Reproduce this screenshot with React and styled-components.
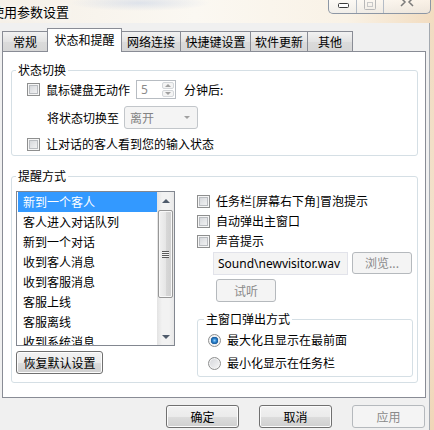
import React from 'react';
import styled, { createGlobalStyle, css } from 'styled-components';

const GlobalStyle = createGlobalStyle`
    html, body {
        margin: 0;
        padding: 0;
        background: #f0f0f0;
        overflow: hidden;
    }
    body {
        font-family: "Noto Sans", "Noto Sans CJK SC", sans-serif;
        font-size: 12px;
        color: #000;
    }
`;

const tabs = ['常规', '状态和提醒', '网络连接', '快捷键设置', '软件更新', '其他'];
const tabWidths = [46, 75, 60, 71, 58, 46];

const events = [
    '新到一个客人',
    '客人进入对话队列',
    '新到一个对话',
    '收到客人消息',
    '收到客服消息',
    '客服上线',
    '客服离线',
    '收到系统消息'
];

function App() {
    return (
        <Window>
            <GlobalStyle />
            <TitleBar>
                <Title>使用参数设置</Title>
                <CaptionButtons>
                    <CaptionButton $w={28}>
                        <svg width="14" height="8" viewBox="0 0 14 8">
                            <rect x="2.5" y="3.5" width="10" height="4" rx="1" fill="#fff" stroke="#3b3b3b" />
                        </svg>
                    </CaptionButton>
                    <CaptionButton $w={27}>
                        <svg width="14" height="11" viewBox="0 0 14 11">
                            <rect x="1.5" y="-1.5" width="11" height="11" rx="1" fill="none" stroke="#b8b8b8" />
                            <rect x="4.5" y="2.5" width="5" height="4" fill="none" stroke="#c8c8c8" />
                        </svg>
                    </CaptionButton>
                    <CaptionButton $w={46} $last>
                        <svg width="14" height="8" viewBox="0 0 14 8">
                            <path d="M1 -2 L5 2 L1 6 M13 -2 L9 2 L13 6" fill="none" stroke="#7a7a7a" strokeWidth="1.5" />
                        </svg>
                    </CaptionButton>
                </CaptionButtons>
            </TitleBar>
            <Body>
                <Main>
                    <TabStrip>
                        {tabs.map((t, i) => (
                            <Tab key={t} $w={tabWidths[i]} $active={i === 1}>{t}</Tab>
                        ))}
                    </TabStrip>
                    <Panel>
                        <Group>
                            <Legend>状态切换</Legend>
                            <StateBody>
                                <Row>
                                    <CheckBox />
                                    <Label>鼠标键盘无动作</Label>
                                    <SpinBox>
                                        <SpinValue>5</SpinValue>
                                        <SpinArrows>
                                            <SpinArrow><Arrow $up $small /></SpinArrow>
                                            <SpinArrow><Arrow $small /></SpinArrow>
                                        </SpinArrows>
                                    </SpinBox>
                                    <Label $gap={8}>分钟后:</Label>
                                </Row>
                                <SwitchRow>
                                    <Label $gap={0}>将状态切换至</Label>
                                    <Combo>
                                        <span>离开</span>
                                        <Arrow $small />
                                    </Combo>
                                </SwitchRow>
                                <Row>
                                    <CheckBox />
                                    <Label>让对话的客人看到您的输入状态</Label>
                                </Row>
                            </StateBody>
                        </Group>

                        <Group $top={13}>
                            <Legend>提醒方式</Legend>
                            <RemindBody>
                                <LeftCol>
                                    <List>
                                        <Items>
                                            {events.map((e, i) => (
                                                <Item key={e} $selected={i === 0}>{e}</Item>
                                            ))}
                                        </Items>
                                        <ScrollBar>
                                            <ScrollButton><Arrow $up /></ScrollButton>
                                            <Track>
                                                <Thumb>
                                                    <Grip />
                                                </Thumb>
                                            </Track>
                                            <ScrollButton><Arrow /></ScrollButton>
                                        </ScrollBar>
                                    </List>
                                    <Button $w={87} $mt={5}>恢复默认设置</Button>
                                </LeftCol>
                                <RightCol>
                                    <CheckList>
                                        <Row>
                                            <CheckBox />
                                            <Label>任务栏[屏幕右下角]冒泡提示</Label>
                                        </Row>
                                        <Row>
                                            <CheckBox />
                                            <Label>自动弹出主窗口</Label>
                                        </Row>
                                        <Row>
                                            <CheckBox />
                                            <Label>声音提示</Label>
                                        </Row>
                                    </CheckList>
                                    <FileRow>
                                        <FileField>Sound\newvisitor.wav</FileField>
                                        <Button $w={60} $h={22} disabled>浏览...</Button>
                                    </FileRow>
                                    <ListenRow>
                                        <Button $w={60} disabled>试听</Button>
                                    </ListenRow>
                                    <SubGroup>
                                        <Legend $ml={6}>主窗口弹出方式</Legend>
                                        <RadioBody>
                                            <Row>
                                                <Radio $checked />
                                                <Label>最大化且显示在最前面</Label>
                                            </Row>
                                            <Row>
                                                <Radio />
                                                <Label>最小化显示在任务栏</Label>
                                            </Row>
                                        </RadioBody>
                                    </SubGroup>
                                </RightCol>
                            </RemindBody>
                        </Group>
                    </Panel>
                    <ButtonBar>
                        <Button $w={73}>确定</Button>
                        <Button $w={73}>取消</Button>
                        <Button $w={73} disabled>应用</Button>
                    </ButtonBar>
                </Main>
                <FrameEdge />
            </Body>
        </Window>
    );
}

const Window = styled.div`
    width: 434px;
    height: 430px;
    display: flex;
    flex-direction: column;
    overflow: hidden;
    background: #f0f0f0;
`;

const TitleBar = styled.div`
    height: 23px;
    flex: none;
    display: flex;
    justify-content: space-between;
    align-items: flex-start;
    overflow: hidden;
    background:
        radial-gradient(ellipse 70px 8px at 140px 3px, rgba(170, 190, 225, 0.35), transparent),
        linear-gradient(90deg, #f5f0e8 0%, #fbf8f2 45%, #f9f2e6 80%, #f2dcc0 100%);
`;

const Title = styled.div`
    font-family: "Noto Sans CJK SC", sans-serif;
    font-size: 13px;
    line-height: 23px;
    text-indent: -9px;
    white-space: nowrap;
    text-shadow: 0 0 6px #fff;
`;

const CaptionButtons = styled.div`
    display: flex;
    height: 13px;
    margin-right: 3px;
    border: 1px solid #8d97a5;
    border-top: none;
    border-radius: 0 0 5px 5px;
    background: linear-gradient(rgba(255, 255, 255, 0.6), rgba(235, 235, 235, 0.6));
    overflow: hidden;
`;

const CaptionButton = styled.div`
    width: ${p => p.$w}px;
    display: flex;
    align-items: flex-start;
    justify-content: center;
    border-right: ${p => (p.$last ? 'none' : '1px solid #b4bcc6')};
    box-sizing: border-box;
`;

const Body = styled.div`
    flex: 1;
    display: flex;
    min-height: 0;
`;

const Main = styled.div`
    flex: 1;
    display: flex;
    flex-direction: column;
    padding: 5px 3px 0 2px;
`;

const FrameEdge = styled.div`
    width: 4px;
    border-left: 1px solid #a3a9b0;
    background: linear-gradient(#f1dcc2, #f3e2cc 60%, #f0d6b8);
`;

const TabStrip = styled.div`
    display: flex;
    align-items: flex-end;
    height: 24px;
    margin-bottom: -1px;
    position: relative;
    z-index: 1;
`;

const Tab = styled.div`
    width: ${p => p.$w}px;
    box-sizing: border-box;
    display: flex;
    align-items: center;
    justify-content: center;
    font-family: "Noto Sans CJK SC", sans-serif;
    font-size: 12px;
    border: 1px solid #898c95;
    border-bottom: none;
    margin-left: -1px;
    height: 20px;
    margin-bottom: 1px;
    background: linear-gradient(#f2f2f2, #e3e3e3 50%, #dbdbdb 51%, #d6d6d6);

    &:first-child {
        margin-left: 0;
    }

    ${p => p.$active && css`
        height: 24px;
        margin-bottom: 0;
        padding-bottom: 2px;
        background: #fff;
        position: relative;
        z-index: 2;
    `}
`;

const Panel = styled.div`
    height: 347px;
    box-sizing: border-box;
    border: 1px solid #898c95;
    background: #fff;
    padding: 11px 7px 0 8px;
`;

const Group = styled.fieldset`
    margin: ${p => p.$top || 0}px 0 0;
    padding: 0;
    border: 1px solid #d5dfe5;
    border-radius: 3px;
    min-width: 0;
`;

const SubGroup = styled(Group)`
    margin-top: 10px;
`;

const Legend = styled.legend`
    margin-left: ${p => (p.$ml === undefined ? 4 : p.$ml)}px;
    padding: 0 2px;
    font-family: "Noto Sans CJK SC", sans-serif;
    font-size: 12px;
    line-height: 14px;
`;

const StateBody = styled.div`
    display: flex;
    flex-direction: column;
    gap: 7px;
    padding: 3px 0 3px 15px;
`;

const Row = styled.div`
    display: flex;
    align-items: center;
    min-height: 16px;
`;

const SwitchRow = styled(Row)`
    padding-left: 20px;
`;

const Label = styled.span`
    margin-left: ${p => (p.$gap === undefined ? 6 : p.$gap)}px;
    font-family: "Noto Sans CJK SC", sans-serif;
    line-height: 14px;
    white-space: nowrap;
`;

const CheckBox = styled.span`
    flex: none;
    width: 13px;
    height: 13px;
    box-sizing: border-box;
    border: 1px solid #8e8f8f;
    background: linear-gradient(135deg, #cfd2d6 0%, #e6e7e9 55%, #f7f7f7 100%);
    box-shadow: inset 0 0 0 1px #f6f6f6, inset 0 0 0 2px #b9bcc0;
`;

const Radio = styled.span`
    flex: none;
    width: 13px;
    height: 13px;
    box-sizing: border-box;
    border-radius: 50%;
    border: 1px solid #8e8f8f;
    background: ${p => p.$checked
        ? 'radial-gradient(circle at 50% 50%, #8fd0ff 0, #2a7fc9 2px, #1d5d9b 3.5px, #e9ebee 4px, #f7f7f7 6px)'
        : 'linear-gradient(135deg, #d3d5d9, #f7f7f7)'};
    box-shadow: inset 0 0 0 1px #f4f4f4;
`;

const SpinBox = styled.div`
    width: 40px;
    height: 19px;
    margin-left: 6px;
    box-sizing: border-box;
    border: 1px solid #b7bcc2;
    display: flex;
    background: #fff;
`;

const SpinValue = styled.span`
    flex: 1;
    padding-left: 4px;
    line-height: 17px;
    color: #8a8a8a;
`;

const SpinArrows = styled.div`
    width: 12px;
    display: flex;
    flex-direction: column;
    gap: 1px;
    padding: 1px 1px 1px 0;
`;

const SpinArrow = styled.div`
    flex: 1;
    display: flex;
    align-items: center;
    justify-content: center;
    border: 1px solid #d4d7da;
    border-radius: 2px;
    background: #f4f4f4;
`;

const Arrow = styled.span`
    width: 0;
    height: 0;
    border-left: ${p => (p.$small ? 3 : 4)}px solid transparent;
    border-right: ${p => (p.$small ? 3 : 4)}px solid transparent;
    ${p => (p.$up
        ? `border-bottom: ${p.$small ? 3 : 4}px solid ${p.$small ? '#a0a0a0' : '#4f5b6b'};`
        : `border-top: ${p.$small ? 3 : 4}px solid ${p.$small ? '#a0a0a0' : '#4f5b6b'};`)}
`;

const Combo = styled.div`
    width: 74px;
    height: 23px;
    margin-left: 5px;
    box-sizing: border-box;
    border: 1px solid #c2c6ca;
    border-radius: 3px;
    background: #f4f4f4;
    display: flex;
    align-items: center;
    justify-content: space-between;
    padding: 0 7px 0 5px;
    font-family: "Noto Sans CJK SC", sans-serif;
    color: #838383;
`;

const RemindBody = styled.div`
    display: flex;
    gap: 22px;
    padding: 8px 4px 5px 4px;
`;

const LeftCol = styled.div`
    display: flex;
    flex-direction: column;
    align-items: flex-start;
`;

const List = styled.div`
    width: 159px;
    height: 155px;
    box-sizing: border-box;
    border: 1px solid #828790;
    display: flex;
    background: #fff;
`;

const Items = styled.div`
    flex: 1;
    overflow: hidden;
    padding-left: 1px;
`;

const Item = styled.div`
    height: 20px;
    line-height: 20px;
    padding-left: 5px;
    font-family: "Noto Sans CJK SC", sans-serif;
    white-space: nowrap;
    background: ${p => (p.$selected ? '#3399ff' : 'transparent')};
    color: ${p => (p.$selected ? '#fff' : '#000')};
`;

const ScrollBar = styled.div`
    width: 17px;
    display: flex;
    flex-direction: column;
    background: linear-gradient(90deg, #e3e3e3, #f2f2f2 30%, #f2f2f2 70%, #e8e8e8);
`;

const ScrollButton = styled.div`
    height: 17px;
    display: flex;
    align-items: center;
    justify-content: center;
`;

const Track = styled.div`
    flex: 1;
    padding: 1px 1px 0 1px;
`;

const Thumb = styled.div`
    height: 88px;
    box-sizing: border-box;
    border: 1px solid #979797;
    border-radius: 2px;
    background: linear-gradient(90deg, #f1f1f1, #e6e6e6 50%, #d8d8d8 51%, #cfcfcf);
    box-shadow: inset 0 0 0 1px #f8f8f8;
    display: flex;
    align-items: center;
    justify-content: center;
`;

const Grip = styled.span`
    width: 7px;
    height: 7px;
    background: repeating-linear-gradient(#5a5a5a 0 1px, #f4f4f4 1px 2px);
`;

const RightCol = styled.div`
    width: 216px;
    display: flex;
    flex-direction: column;
    padding-top: 2px;
`;

const CheckList = styled.div`
    display: flex;
    flex-direction: column;
    gap: 4px;
    padding-left: 0;
`;

const FileRow = styled.div`
    display: flex;
    align-items: flex-start;
    gap: 4px;
    margin: 3px 0 0 16px;
`;

const FileField = styled.div`
    width: 135px;
    height: 23px;
    box-sizing: border-box;
    border: 1px solid #e2e3ea;
    background: #f4f4f4;
    padding-left: 4px;
    line-height: 21px;
    white-space: nowrap;
    overflow: hidden;
`;

const ListenRow = styled.div`
    display: flex;
    margin: 4px 0 0 19px;
`;

const RadioBody = styled.div`
    display: flex;
    flex-direction: column;
    gap: 7px;
    padding: 6px 0 5px 10px;
`;

const ButtonBar = styled.div`
    display: flex;
    justify-content: flex-end;
    gap: 20px;
    padding: 7px 1px 0 0;
`;

const Button = styled.button`
    width: ${p => p.$w}px;
    height: ${p => p.$h || 23}px;
    margin-top: ${p => p.$mt || 0}px;
    box-sizing: border-box;
    padding: 0;
    border: 1px solid #707070;
    border-radius: 3px;
    background: linear-gradient(#f2f2f2 0%, #ebebeb 50%, #dddddd 51%, #cfcfcf 100%);
    box-shadow: inset 0 0 0 1px #fcfcfc;
    font-family: "Noto Sans CJK SC", sans-serif;
    font-size: 12px;
    line-height: 14px;
    color: #000;

    &:disabled {
        border-color: #b5b9bd;
        background: #f4f4f4;
        box-shadow: none;
        color: #8a8a8a;
    }
`;

export default App;
